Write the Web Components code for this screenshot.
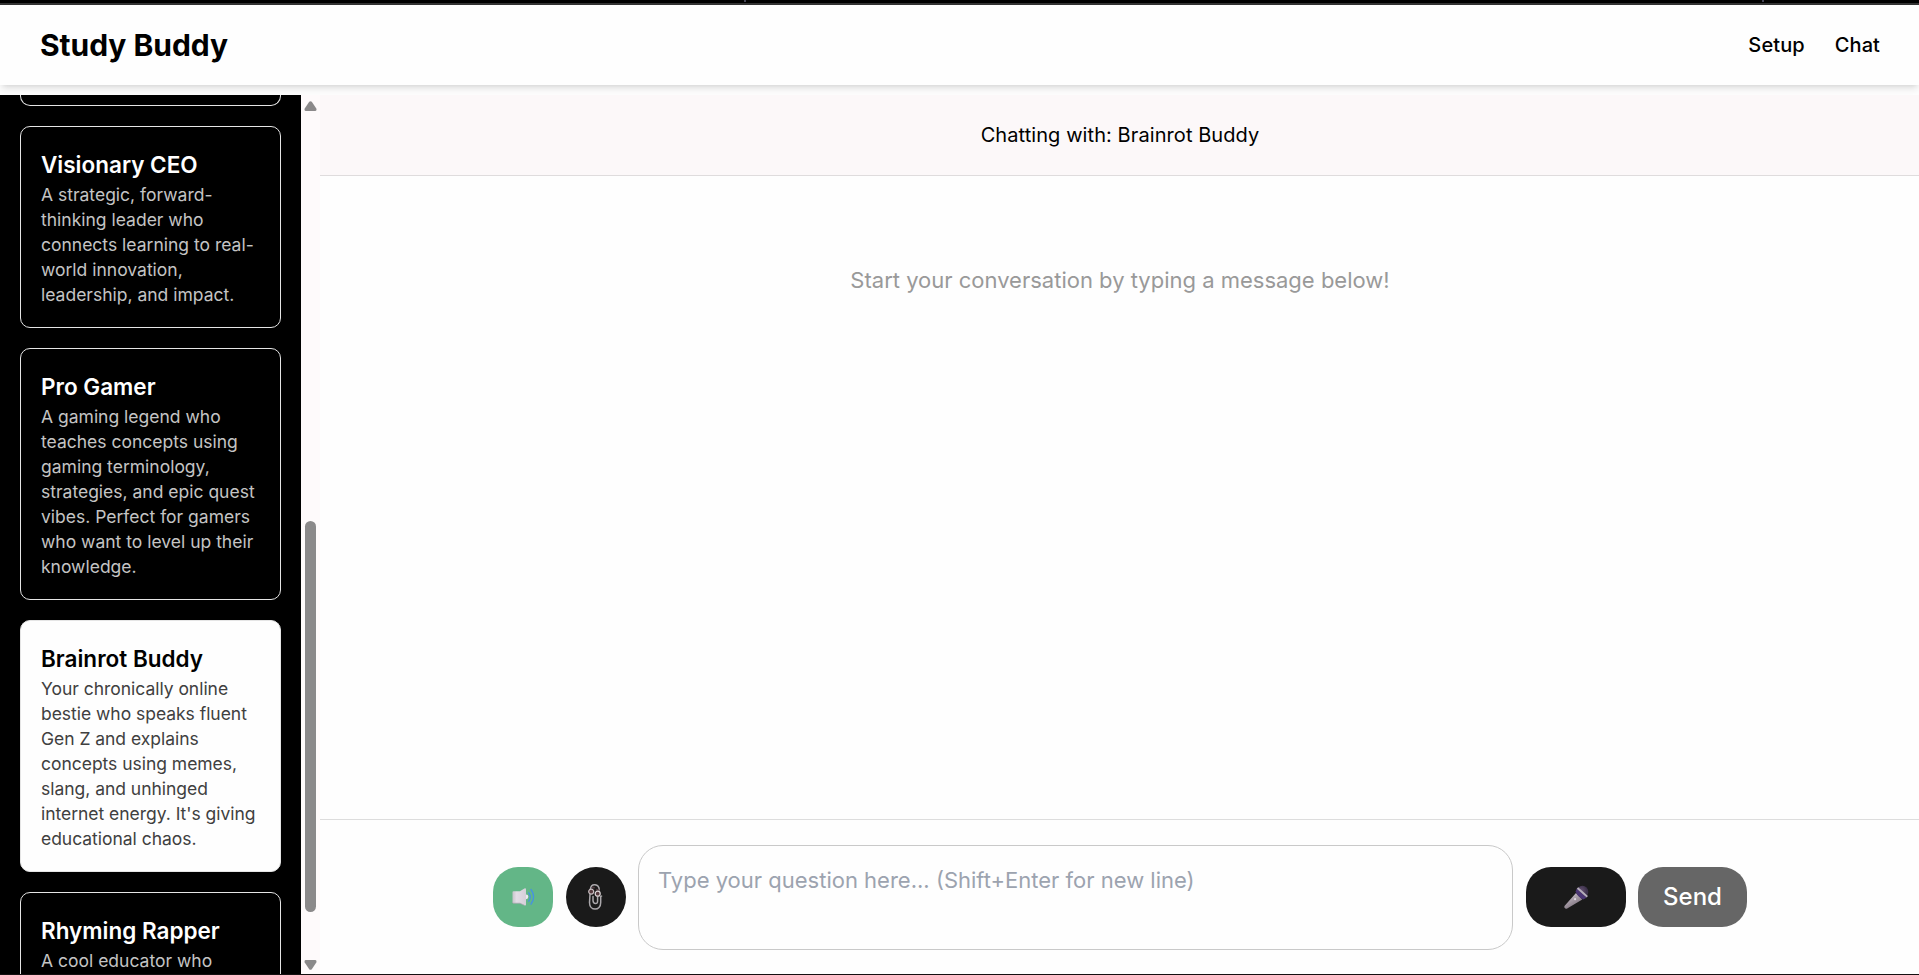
<!DOCTYPE html>
<html lang="en">
<head>
<meta charset="utf-8">
<title>Study Buddy</title>
<style>
html, body{
    height: 100%;
}
body{
    margin: 0;
    overflow: hidden;
    background: #fefefe;
    color: #000;
    font-family: Inter, "Liberation Sans", sans-serif;
    font-size: 20px;
    line-height: 30px;
}
</style>
</head>
<body>
<study-app></study-app>

<script>
// ---------- top navigation ----------
const navTemplate = document.createElement("template");
navTemplate.innerHTML = `
<style>
:host{
    display: block;
    height: 95px;
    overflow: hidden;
}
.edge{
    height: 3px;
    background: linear-gradient(#445, #445) 744px 0 / 2px 2px no-repeat, linear-gradient(#445, #445) 1762px 0 / 2px 2px no-repeat, #000;
    border-bottom: 2px solid #333;
}
header{
    display: flex;
    align-items: center;
    justify-content: space-between;
    box-sizing: border-box;
    height: 80px;
    padding: 0 39px 0 40px;
    background: #fefefe;
    box-shadow: 0 5px 7.5px -1px rgba(0,0,0,.1), 0 2.5px 5px -2.5px rgba(0,0,0,.1);
}
h1{
    margin: 0;
    font-size: 30px;
    font-weight: 700;
    line-height: 40px;
    letter-spacing: -.04px;
}
nav{
    display: flex;
    gap: 30px;
    font-weight: 500;
    letter-spacing: .1px;
}
</style>
<div class="edge"></div>
<header>
    <h1></h1>
    <nav><slot></slot></nav>
</header>
`;
class StudyNav extends HTMLElement{
    constructor(){
        super();
        this.attachShadow({mode:"open"});
        this.shadowRoot.appendChild(navTemplate.content.cloneNode(true));
    }
    connectedCallback(){
        this.shadowRoot.querySelector("h1").textContent = this.getAttribute("data-title");
    }
}
customElements.define("study-nav", StudyNav);

// ---------- persona card ----------
const cardTemplate = document.createElement("template");
cardTemplate.innerHTML = `
<style>
:host{
    display: block;
    flex: none;
    box-sizing: border-box;
    width: 261px;
    padding: 20px;
    border: 1px solid #e5e5e5;
    border-radius: 10px;
    background: #000;
    color: #fff;
}
h3{
    margin: 0;
    font-size: 22.5px;
    font-weight: 600;
    line-height: 35px;
    white-space: nowrap;
}
p{
    margin: 0;
    font-size: 17.5px;
    line-height: 25px;
    color: #c4c4c4;
}
:host([selected]){
    background: #fefefe;
    color: #000;
}
:host([selected]) p{
    color: #404040;
    letter-spacing: -.03px;
}
:host([cut]){
    height: 11px;
    padding: 0;
    border-top: 0;
    border-radius: 0 0 10px 10px;
}
</style>
<h3></h3>
<p><slot></slot></p>
`;
class PersonaCard extends HTMLElement{
    constructor(){
        super();
        this.attachShadow({mode:"open"});
        this.shadowRoot.appendChild(cardTemplate.content.cloneNode(true));
    }
    connectedCallback(){
        const name = this.getAttribute("data-name") ? this.getAttribute("data-name") : "";
        if(name){
            this.shadowRoot.querySelector("h3").textContent = name;
        }else{
            this.shadowRoot.querySelector("h3").remove();
        }
    }
}
customElements.define("persona-card", PersonaCard);

// ---------- sidebar with its scrollbar ----------
const listTemplate = document.createElement("template");
listTemplate.innerHTML = `
<style>
:host{
    display: flex;
    width: 320px;
    min-height: 0;
    overflow: hidden;
}
.cards{
    display: flex;
    flex-direction: column;
    gap: 20px;
    box-sizing: border-box;
    width: 301px;
    padding: 0 20px;
    overflow: hidden;
    background: #000;
}
.bar{
    display: flex;
    flex-direction: column;
    align-items: center;
    box-sizing: border-box;
    width: 19px;
    padding: 6px 0 4px;
    background: #fefafb;
}
svg{
    display: block;
    fill: #8b898a;
}
.track{
    flex: 1;
    padding-top: 410px;
}
.thumb{
    width: 11px;
    height: 391px;
    border-radius: 6px;
    background: #8b898a;
}
</style>
<div class="cards"><slot></slot></div>
<div class="bar">
    <svg width="13" height="10" viewBox="0 0 13 10"><path d="M5.2 .8Q6.5-.5 7.8 .8L12.3 7.5Q13 10 11 10H2Q0 10 .7 7.5Z"/></svg>
    <div class="track"><div class="thumb"></div></div>
    <svg width="13" height="10" viewBox="0 0 13 10"><path d="M5.2 9.2Q6.5 10.5 7.8 9.2L12.3 2.5Q13 0 11 0H2Q0 0 .7 2.5Z"/></svg>
</div>
`;
class PersonaList extends HTMLElement{
    constructor(){
        super();
        this.attachShadow({mode:"open"});
        this.shadowRoot.appendChild(listTemplate.content.cloneNode(true));
    }
}
customElements.define("persona-list", PersonaList);

// ---------- round buttons of the composer ----------
const buttonTemplate = document.createElement("template");
buttonTemplate.innerHTML = `
<style>
:host{
    display: flex;
    flex: none;
    align-items: center;
    justify-content: center;
    width: 60px;
    height: 60px;
    border-radius: 25px;
    background: #1a1a1a;
    color: #fff;
    font-size: 24px;
    font-weight: 500;
}
:host([kind="sound"]){
    background: #63b687;
}
:host([kind="attach"]){
    border-radius: 50%;
}
:host([kind="mic"]){
    width: 100px;
}
:host([kind="send"]){
    width: 109px;
    background: #666;
}
</style>
<slot></slot>
`;
class ChatButton extends HTMLElement{
    constructor(){
        super();
        this.attachShadow({mode:"open"});
        this.shadowRoot.appendChild(buttonTemplate.content.cloneNode(true));
    }
}
customElements.define("chat-button", ChatButton);

// ---------- composer ----------
const composerTemplate = document.createElement("template");
composerTemplate.innerHTML = `
<style>
:host{
    display: flex;
    align-items: center;
    justify-content: center;
    gap: 12px;
    box-sizing: border-box;
    height: 155px;
    padding-left: 1px;
    border-top: 1px solid #ddd;
}
textarea{
    display: block;
    box-sizing: border-box;
    width: 875px;
    height: 105px;
    margin: 0;
    padding: 17px 19px;
    border: 1px solid #c9c9c9;
    border-radius: 25px;
    outline: 0;
    resize: none;
    background: #fefefe;
    font-family: inherit;
    font-size: 22px;
    line-height: 35px;
}
textarea::placeholder{
    color: #9ca3af;
    opacity: 1;
}
[kind="sound"], textarea{
    margin-right: 1px;
}
svg{
    display: block;
}
[kind="attach"] svg{
    margin-right: 2px;
}
</style>
<chat-button kind="sound">
    <svg width="24" height="20" viewBox="0 0 24 20">
        <defs>
            <linearGradient id="cone" x1="0" x2="1"><stop offset="0" stop-color="#c8c4cb"/><stop offset=".3" stop-color="#e3dde6"/><stop offset="1" stop-color="#d6cfd9"/></linearGradient>
        </defs>
        <path d="M1.500 5Q1.500 4.200 2.500 4.200H9L13.400 1.400Q15 .8 15 2.500V17.500Q15 19 13.400 18.300L9 16.200H2.500Q1.500 16.200 1.500 15.200Z" fill="url(#cone)"/>
        <path d="M15 7.500Q17.300 7.600 17.300 9.800T15 12.300Z" fill="#eee8f0"/>
        <path d="M1.500 15.200Q1.500 16.200 2.500 16.200H9L13.400 18.300" fill="none" stroke="#aaa1b0" stroke-width=".7"/>
        <path d="M17.800 5.800Q20.800 10 17.800 14.200M20 2.500Q25.200 9.800 20 17.200" fill="none" stroke="#4691e2" stroke-width="1.300" stroke-linecap="round"/>
    </svg>
</chat-button>
<chat-button kind="attach">
    <svg width="16" height="28" viewBox="0 0 16 28">
        <g fill="none" stroke="#aaa7ab" stroke-width="1.500" stroke-linecap="round">
            <path d="M3.300 6.500C3.800 2.700 6 1.500 8 1.700C11 2 12.200 4.300 12.300 7"/>
            <path d="M6 13.500V17.500Q6.200 20.600 8.500 20.600T10.600 17.500V14"/>
            <path d="M3 11.500L2.500 19.500C2.500 28.300 13.800 28.300 13.700 19.500V13.500"/>
        </g>
        <path d="M5 4.800Q6.500 3.800 7.600 5.300M9 6.500L12.500 7.500" fill="none" stroke="#513b40" stroke-width="1.500"/>
        <circle cx="4.200" cy="8.600" r="2.500" fill="#54383c" stroke="#c8bec1" stroke-width="1.200"/>
        <circle cx="10.700" cy="10.700" r="2.500" fill="#54383c" stroke="#ded7d9" stroke-width="1.200"/>
        <path d="M13.800 13.200L15.200 13" stroke="#bbb" stroke-width="1.200"/>
    </svg>
</chat-button>
<textarea placeholder="Type your question here... (Shift+Enter for new line)"></textarea>
<chat-button kind="mic">
    <svg width="26" height="24" viewBox="0 0 26 24">
        <defs>
            <linearGradient id="grip" x1=".3" y1=".2" x2=".7" y2=".8"><stop offset="0" stop-color="#bcb2bd"/><stop offset="1" stop-color="#817680"/></linearGradient>
            <radialGradient id="head" cx=".4" cy=".4"><stop offset="0" stop-color="#655372"/><stop offset="1" stop-color="#3b3049"/></radialGradient>
        </defs>
        <path d="M13 8L19.300 14.500L4.200 23.500Q2.500 24.200 1.600 22.800Q1 21.900 1.700 20.800Z" fill="url(#grip)"/>
        <circle cx="19.400" cy="6.700" r="5.900" fill="url(#head)"/>
        <path d="M13.800 3.600L23.500 12.800L20.200 14.500Q14.500 12 12.600 6.600Z" fill="#4a3573"/>
        <path d="M14.500 3L24.300 11.700" stroke="#b5adbb" stroke-width="2"/>
        <circle cx="12.100" cy="14.200" r="1.100" fill="#ddd5e0"/>
    </svg>
</chat-button>
<chat-button kind="send">Send</chat-button>
`;
class ChatComposer extends HTMLElement{
    constructor(){
        super();
        this.attachShadow({mode:"open"});
        this.shadowRoot.appendChild(composerTemplate.content.cloneNode(true));
    }
}
customElements.define("chat-composer", ChatComposer);

// ---------- chat panel ----------
const panelTemplate = document.createElement("template");
panelTemplate.innerHTML = `
<style>
:host{
    display: flex;
    flex-direction: column;
    flex: 1;
    min-width: 0;
}
.with{
    display: flex;
    align-items: center;
    justify-content: center;
    height: 80px;
    padding-left: 1px;
    border-bottom: 1px solid #dfdcdd;
    background: #fcf8f9;
    letter-spacing: .08px;
}
.messages{
    flex: 1;
    padding: 87px 0 0 1px;
    text-align: center;
    font-size: 22px;
    line-height: 35px;
    color: #999;
}
</style>
<div class="with"></div>
<div class="messages"><slot></slot></div>
<chat-composer></chat-composer>
`;
class ChatPanel extends HTMLElement{
    constructor(){
        super();
        this.attachShadow({mode:"open"});
        this.shadowRoot.appendChild(panelTemplate.content.cloneNode(true));
    }
    connectedCallback(){
        const buddy = this.getAttribute("data-buddy");
        this.shadowRoot.querySelector(".with").textContent = `Chatting with: ${buddy}`;
    }
}
customElements.define("chat-panel", ChatPanel);

// ---------- whole page ----------
const appTemplate = document.createElement("template");
appTemplate.innerHTML = `
<style>
:host{
    display: flex;
    flex-direction: column;
    box-sizing: border-box;
    height: 100vh;
    border-bottom: 1px solid #141011;
}
main{
    display: flex;
    flex: 1;
    min-height: 0;
}
</style>
<study-nav data-title="Study Buddy"><span>Setup</span><span>Chat</span></study-nav>
<main>
    <persona-list>
        <persona-card cut></persona-card>
        <persona-card data-name="Visionary CEO">A strategic, forward-thinking leader who connects learning to real-world innovation, leadership, and impact.</persona-card>
        <persona-card data-name="Pro Gamer">A gaming legend who teaches concepts using gaming terminology, strategies, and epic quest vibes. Perfect for gamers who want to level up their knowledge.</persona-card>
        <persona-card data-name="Brainrot Buddy" selected>Your chronically online bestie who speaks fluent Gen Z and explains concepts using memes, slang, and unhinged internet energy. It's giving educational chaos.</persona-card>
        <persona-card data-name="Rhyming Rapper">A cool educator who</persona-card>
    </persona-list>
    <chat-panel data-buddy="Brainrot Buddy">Start your conversation by typing a message below!</chat-panel>
</main>
`;
class StudyApp extends HTMLElement{
    constructor(){
        super();
        this.attachShadow({mode:"open"});
        this.shadowRoot.appendChild(appTemplate.content.cloneNode(true));
    }
}
customElements.define("study-app", StudyApp);
</script>
</body>
</html>
